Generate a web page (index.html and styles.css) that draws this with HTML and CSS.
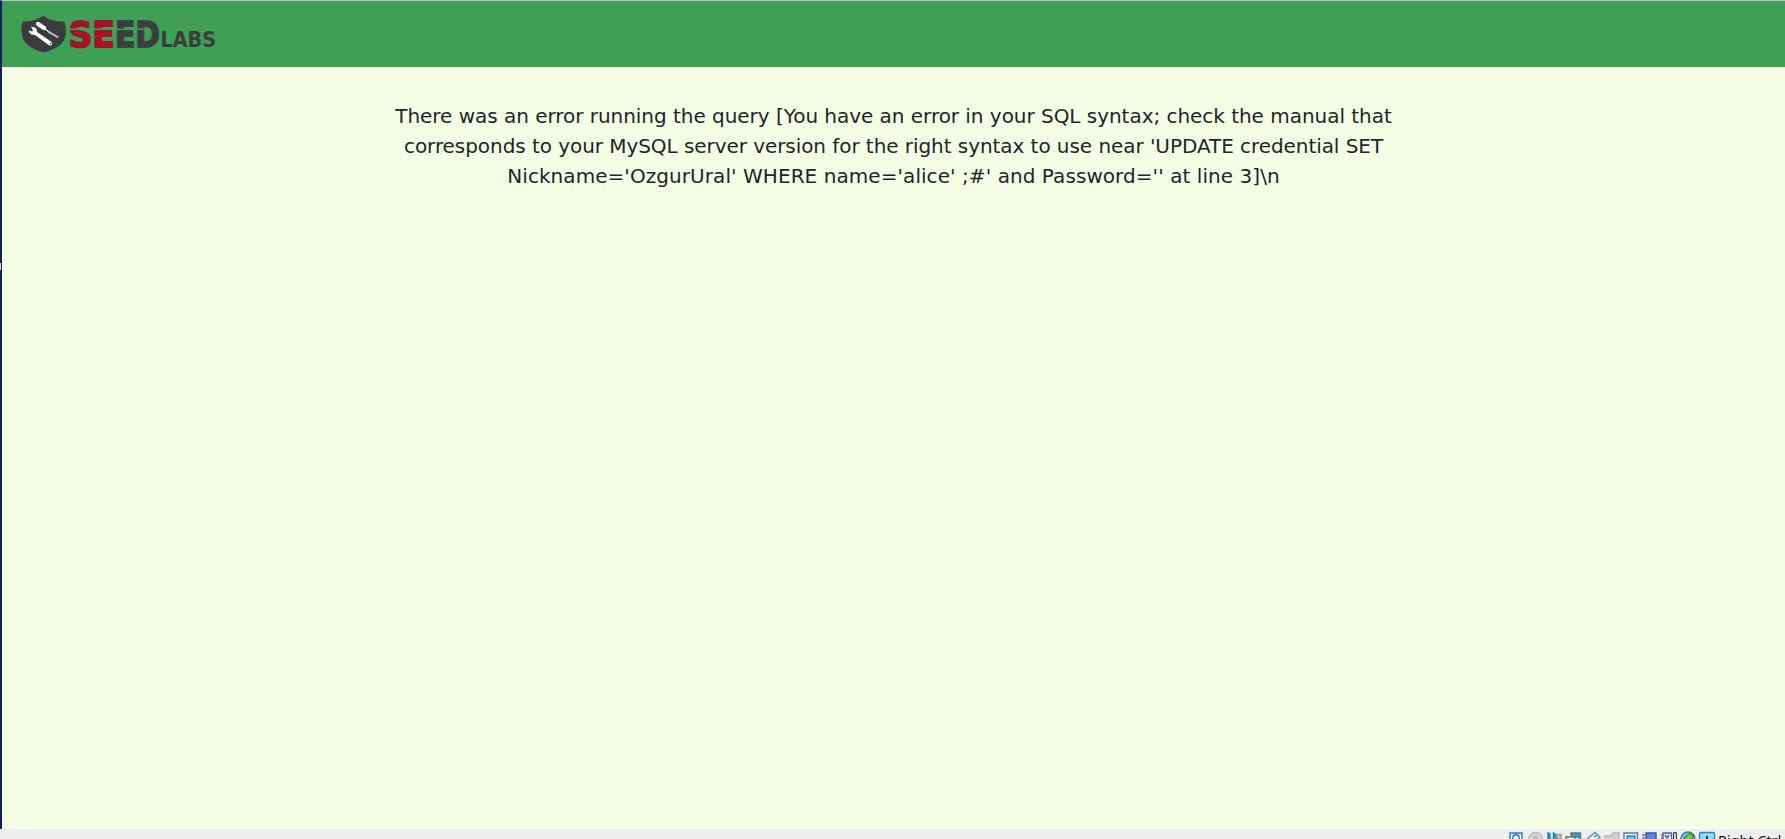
FILE: index.html
```
<!DOCTYPE html>
<html lang="en">
<head>
<meta charset="utf-8">
<title>SQLi Lab</title>
<link rel="stylesheet" href="styles.css">
</head>
<body>
<div class="guest">
  <header class="navbar">
    <svg class="logo" width="200" height="40" viewBox="20 14 200 40" aria-label="SEED Labs">
      <path d="M43.500 16Q51 22 64.500 22Q68 38 60 45Q53 50 43.500 52Q34 50 28 45Q19.500 38 22.500 22Q35 22 43.500 16Z" fill="#393b3d" stroke="#34473b" stroke-width=".7"/>
      <path d="M38 24L44 28" stroke="#fff" stroke-width="4.2" stroke-linecap="round"/>
      <path d="M44 28L49 32" stroke="#fff" stroke-width="1.3"/>
      <path d="M49 32L57.5 37" stroke="#c9c9c9" stroke-width="2" stroke-linecap="round"/>
      <path d="M28.5 30.5L32 31.5L33 30L31 27Q35 26.5 36.5 29L37 32L51 41.5Q53 43.500 51.500 45Q50 46 48 44.500L35 35L31.500 34.500Q29 33.500 28.500 30.500Z" fill="#fff"/>
      <circle cx="50.5" cy="43.6" r=".8" fill="#393b3d"/>
      <g class="seed">
        <text class="red" x="68.500" y="46.500" textLength="46.500" lengthAdjust="spacingAndGlyphs">SE</text>
        <text class="dark" x="115" y="46.500" textLength="45" lengthAdjust="spacingAndGlyphs">ED</text>
      </g>
      <path d="M68 29.200H148" stroke="#3fa055" stroke-width="1.600"/>
      <text class="labs" x="160.500" y="47.200" textLength="55.500" lengthAdjust="spacingAndGlyphs">LABS</text>
    </svg>
  </header>
  <main class="content">
    <p class="message"><span class="line first">There was an error running the query [You have an error in your SQL syntax; check the manual that </span><span class="line second">corresponds to your MySQL server version for the right syntax to use near 'UPDATE credential SET </span><span class="line third">Nickname='OzgurUral' WHERE name='alice' ;#' and Password='' at line 3]\n</span></p>
  </main>
  <span class="handle"></span>
</div>
<footer class="statusbar">
  <svg class="indicators" width="208" height="10" viewBox="1508 829 208 10">
    <g stroke-width="1.4">
      <path d="M1510 839V833H1522V839" fill="#e5f2ff" stroke="#2878d0"/>
      <circle cx="1516" cy="838" r="3.2" fill="#fff" stroke="#2878d0"/>
      <circle cx="1535.500" cy="839.500" r="7" fill="#d4d4d4" stroke="#bebebe"/>
      <circle cx="1535.500" cy="839" r="2" fill="#eee" stroke="#aaa"/>
      <path d="M1548 833L1550 834V839H1548ZM1553.500 839V833L1556 835V839" fill="#39a6df" stroke="#267cac"/>
      <path d="M1557 834.500H1561V839H1557Z" fill="#ccc" stroke="#999"/>
      <path d="M1571 836V833H1580.500V839" fill="#209fe0" stroke="#737373"/>
      <path d="M1566 839V837H1575V839" fill="#fff" stroke="#666"/>
      <path d="M1587 839L1595 832.500L1600 837L1598 839" fill="#e8f5ff" stroke="#598caf"/>
      <path d="M1594 837L1597 835" stroke="#277eb4"/>
      <path d="M1605 839V836H1611L1613 833H1619V839" fill="#d0d0d0" stroke="#b7b7b7"/>
      <path d="M1624 839V833H1637.500V839" fill="#fff" stroke="#557b91"/>
      <path d="M1627 839V836H1635V839" fill="#67caff" stroke="#1190d0"/>
      <path d="M1646 839V833H1656V839" fill="#6284d8" stroke="#3755a6"/>
      <path d="M1642 835H1645M1642 838H1645" stroke="#6075a9"/>
      <path d="M1663 839V833H1671.500V839" fill="#e4eaff" stroke="#4864a7"/>
      <path d="M1661 835H1663M1661 838H1663M1665 835L1667 838L1669 835" fill="none" stroke="#4d65ad"/>
      <path d="M1673.700 839V832.700H1676.300V839" fill="#fff" stroke="#111" stroke-width="1"/>
      <circle cx="1688" cy="839" r="7" fill="#80c9eb" stroke="#397fa5"/>
      <path d="M1683 839L1690 833L1694 837L1691 839" fill="#7dcc43" stroke="#428c38"/>
      <path d="M1699.500 839V834Q1699.500 832.500 1701 832.500H1713Q1714.500 832.500 1714.500 834V839" fill="#8bdcff" stroke="#248dc0"/>
      <path d="M1707 836V839" stroke="#133f5c" stroke-width="2"/>
    </g>
  </svg>
  <span class="hostkey">Right Ctrl</span>
</footer>
</body>
</html>
```
FILE: styles.css
```
* { box-sizing: border-box; }
body {
  margin: 0;
  height: 839px;
  overflow: hidden;
  display: flex;
  flex-direction: column;
  background: #eee;
}
.guest {
  position: relative;
  height: 829px;
  border-top: 1px solid #c0c0c0;
  border-left: 2px solid #12205c;
  background: #f4fee5;
}
.navbar {
  height: 66px;
  padding: 13px 0 0 18px;
  background: #3fa055;
}
.logo { display: block; }
.seed {
  font: bold 35px "DejaVu Sans", sans-serif;
  stroke-width: 1.8px;
  stroke-linejoin: round;
}
.red { fill: #b40d28; stroke: #931b2a; }
.dark { fill: #3a3c3e; stroke: #3a4440; }
.labs {
  font: bold 21px "DejaVu Sans", sans-serif;
  fill: #3a3c3e;
}
.content {
  padding-top: 34px;
  display: flex;
  justify-content: center;
}
.message {
  width: 1050px;
  margin: 0;
  text-align: center;
  font: 20px/30px "DejaVu Sans", sans-serif;
  color: #212529;
}
.line { display: block; white-space: nowrap; }
.first { letter-spacing: -.035px; }
.second { letter-spacing: -.06px; }
.third { letter-spacing: .063px; }
.handle {
  position: absolute;
  left: -2px;
  top: 262px;
  width: 1px;
  height: 7px;
  background: #d8d8d8;
}
.statusbar {
  height: 10px;
  overflow: hidden;
  display: flex;
  justify-content: flex-end;
  gap: 2px;
  padding-right: 3px;
}
.indicators { flex: none; }
.hostkey {
  width: 64px;
  padding-top: 3px;
  white-space: nowrap;
  font: 14px/18px "Noto Sans", sans-serif;
  letter-spacing: .2px;
  color: #111;
}
```
